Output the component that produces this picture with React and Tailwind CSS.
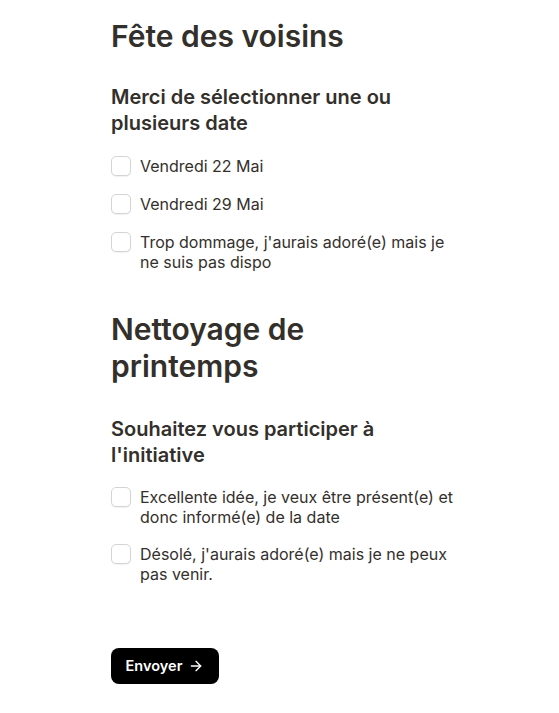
import React from "react";

function Item({ children }) {
  return (
    <label className="flex items-start gap-[9px]">
      <span className="h-5 w-5 shrink-0 rounded-[5px] border border-[#d4d4d4] bg-white shadow-[0_1px_1px_rgba(0,0,0,0.06)]" />
      <span className="text-[16px] leading-5 text-[#33302c]">{children}</span>
    </label>
  );
}

export default function App() {
  return (
    <div className="min-h-[713px] bg-white" style={{ fontFamily: "Inter, 'Noto Sans', sans-serif" }}>
      <div className="mx-auto w-[337px] pt-[18px] pb-[30px] text-[#33302c]">
        <h1 className="text-[30px] font-semibold leading-9">Fête des voisins</h1>
        <h2 className="mt-[31px] text-[20px] font-semibold leading-[25.5px]">Merci de sélectionner une ou plusieurs date</h2>
        <div className="mr-[-10px] mt-[20px] flex flex-col gap-[18px]">
          <Item>Vendredi 22 Mai</Item>
          <Item>Vendredi 29 Mai</Item>
          <Item>Trop dommage, j'aurais adoré(e) mais je ne suis pas dispo</Item>
        </div>
        <h1 className="mt-[39px] text-[30px] font-semibold leading-[37px]">Nettoyage de printemps</h1>
        <h2 className="mt-[32px] text-[20px] font-semibold leading-[25.5px]">Souhaitez vous participer à l'initiative</h2>
        <div className="mr-[-10px] mt-[19px] flex flex-col gap-[17px]">
          <Item>Excellente idée, je veux être présent(e) et donc informé(e) de la date</Item>
          <Item>Désolé, j'aurais adoré(e) mais je ne peux pas venir.</Item>
        </div>
        <button className="mt-[64px] flex h-9 w-[108px] items-center justify-center gap-[6px] rounded-lg bg-black text-[14.5px] font-semibold text-white">
          Envoyer
          <svg width="16" height="16" viewBox="0 0 24 24" fill="none" stroke="currentColor" strokeWidth="2" strokeLinecap="round" strokeLinejoin="round">
            <path d="M5 12h14" />
            <path d="m12 5 7 7-7 7" />
          </svg>
        </button>
      </div>
    </div>
  );
}
